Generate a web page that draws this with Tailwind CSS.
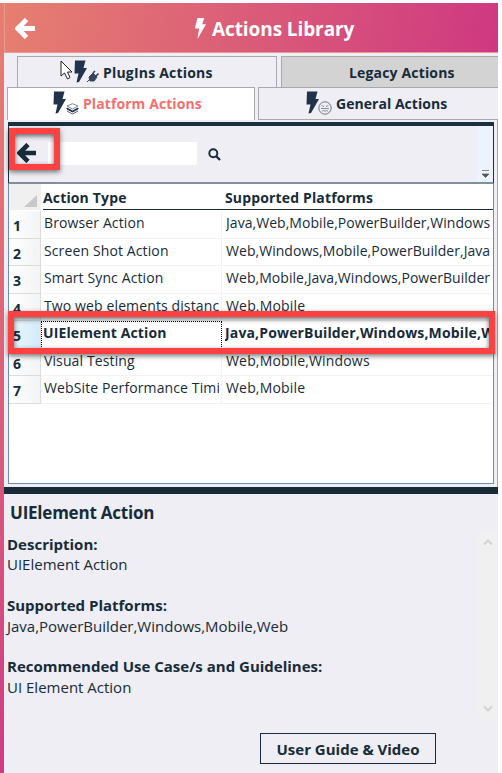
<!DOCTYPE html>
<html lang="en">
<head>
<meta charset="utf-8">
<title>Actions Library</title>
<script src="https://cdn.jsdelivr.net/npm/@tailwindcss/browser@4"></script>
</head>
<body class="w-[502px] h-[773px] overflow-hidden bg-white pt-[3px] font-['Open_Sans',sans-serif] text-[#172b3a] whitespace-nowrap">
<svg class="hidden">
  <symbol id="bolt" viewBox="0 0 14 24" preserveAspectRatio="none"><path d="M4 0H12L9.5 7H14L4 24L6 12H1Z" fill="currentColor"/></symbol>
  <symbol id="bolt-solid" viewBox="0 0 13 23" preserveAspectRatio="none"><path d="M1 .5H11.5L9.5 8H13L5 22L2.5 22.5L4.5 13.5H.5Z" fill="currentColor"/></symbol>
  <symbol id="arrow" viewBox="0 0 20 20"><path d="M11 1.5L2.5 10L11 18.5M3 10H19" fill="none" stroke="currentColor" stroke-width="4.6"/></symbol>
</svg>
<div class="flex w-[498px] h-[770px]">
  <div class="w-1 shrink-0 bg-linear-to-b from-[#e67f70] to-[#d03a82]"></div>
  <main class="flex flex-col w-[494px] bg-[#eeeef4]">
    <header class="relative h-[50px] shrink-0 border-b border-l border-[#eb9a92] bg-linear-[100deg,#e67f70,#cf3881] text-white">
      <svg class="absolute left-[10px] top-[15px] w-[21px] h-[21px]"><use href="#arrow"/></svg>
      <svg class="absolute left-[189px] top-[15px] w-[12px] h-[21px]"><use href="#bolt"/></svg>
      <h1 class="absolute left-[207px] top-[12px] text-[19px] leading-7 font-bold tracking-[-0.09px]">Actions Library</h1>
    </header>
    <nav class="h-[67px] shrink-0 pt-[3px] text-[14px] font-bold">
      <div class="flex h-[31px] pl-[13px] gap-1">
        <div class="flex w-[260px] border border-b-0 border-[#a9a9ac] pl-[56px] relative">
          <svg class="w-[13px] h-[23px] mt-[3px] text-[#22324d]"><use href="#bolt-solid"/></svg>
          <svg class="w-[12px] h-[12px] mt-[13px] text-[#36445c]" viewBox="0 0 12 12"><path d="M0 12L3 9M2 7L6 3L10 7L7 11H3Z" fill="currentColor" stroke="currentColor"/><path d="M6 3L8 1M9 6L11.5 3.5" stroke="currentColor" stroke-width="1.7"/></svg>
          <span class="absolute left-[85px] top-[6px] leading-5 tracking-[0.2px]">PlugIns Actions</span>
          <svg class="absolute left-[42px] top-[3px] w-[13px] h-[20px]" viewBox="0 0 13 20"><path d="M1 1V16L4.5 13L7.5 19L10 17.5L7.5 12H12Z" fill="#fff" stroke="#222" stroke-width="1"/></svg>
        </div>
        <div class="flex-1 border border-b-0 border-r-0 border-[#a9a9ac] bg-[#d3d3d3] pl-[67px] pt-[6px] leading-5 tracking-[0.16px]">Legacy Actions</div>
      </div>
      <div class="flex h-[33px] pl-[3px] gap-[3px]">
        <div class="relative flex w-[248px] border border-b-0 border-[#a9a9ac] bg-white pl-[45px] text-[#f47070]">
          <svg class="w-[13px] h-[23px] mt-[3px] text-[#22324d]"><use href="#bolt-solid"/></svg>
          <svg class="w-[13px] h-[12px] mt-[15px]" viewBox="0 0 13 12"><path d="M1 3L6.5 .7L12 3L6.5 6Z" fill="#fff" stroke="#7c8593"/><path d="M1 5L6.5 8L12 5V6L6.5 9L1 6Z" fill="#22324d" stroke="#22324d"/><path d="M1 8L6.5 11L12 8" fill="none" stroke="#596377"/></svg>
          <span class="absolute left-[75px] top-[6px] leading-5 tracking-[0.08px]">Platform Actions</span>
        </div>
        <div class="relative flex flex-1 border border-r-0 border-[#a9a9ac] pl-[47px]">
          <svg class="w-[13px] h-[23px] mt-[3px] text-[#22324d]"><use href="#bolt-solid"/></svg>
          <svg class="-ml-px w-[14px] h-[14px] mt-[13px]" viewBox="0 0 14 14"><g fill="none" stroke="#6c7588"><circle cx="7" cy="7" r="6.2"/><path d="M3.5 4.5l2.5 1M10.5 4.5l-2.5 1M3 7.5h8M4 10.3l1.5-.8 1.5.6 1.5-.6 1.5.8" stroke-width=".8"/></g></svg>
          <span class="absolute left-[77px] top-[6px] leading-5 tracking-[0.04px]">General Actions</span>
        </div>
      </div>
    </nav>
    <section class="relative h-[367px] shrink-0 border-r border-[#a9a9ac] pl-1 pr-[3px] pt-[2px]">
      <div class="flex h-[62px] border-t-4 border-b-2 border-r border-l border-t-[#1b303e] border-x-[#1b303e] border-b-[#7f909b]">
        <svg class="ml-[8px] mt-[17px] w-[20px] h-[20px]"><use href="#arrow"/></svg>
        <div class="ml-[11px] mt-[16px] w-[149px] h-[23px] bg-white"></div>
        <svg class="ml-[11px] mt-[22px] w-[13px] h-[13px]" viewBox="0 0 13 13"><circle cx="5.3" cy="5.3" r="4" fill="none" stroke="currentColor" stroke-width="1.9"/><path d="M8 8L12 12" stroke="currentColor" stroke-width="2.3"/></svg>
        <div class="ml-auto w-4 bg-[#edf3fd] pt-[44px] pl-[5px]"><svg class="w-[7px] h-[8px]" viewBox="0 0 7 8"><path d="M0 .5H7M0 4H7L3.5 7.5Z" fill="#555" stroke="#555" stroke-width=".7"/></svg></div>
      </div>
      <div class="h-[300px] border border-t-0 border-[#6b8db0] bg-white text-[14px]">
        <div class="grid grid-cols-[32px_182px_1fr] h-[25px] mb-[2px] font-bold leading-[28px] tracking-[0.15px]">
          <div class="bg-[#f0f0f0] pt-[11px] pl-[15px]"><svg class="w-[13px] h-[12px]" viewBox="0 0 13 12"><path d="M13 0V12H0Z" fill="#c8c8c8"/></svg></div>
          <div class="ml-[2px] h-[26px] border-b border-[#172b3a]">Action Type</div>
          <div class="pl-[2px] h-[26px] border-b border-[#172b3a]">Supported Platforms</div>
        </div>
        <div id="rows" class="grid grid-cols-[32px_181px_1fr] auto-rows-[27.5px]"></div>
      </div>
      <div class="absolute left-[5px] top-[8px] w-[51px] h-[42px] border-6 border-[#fb4141] shadow-[0_2px_5px_#0008,inset_0_2px_5px_#0009]"></div>
      <div class="absolute left-[4px] top-[191px] w-[487px] h-[43px] border-6 border-[#fb4141] shadow-[0_2px_5px_#0008,inset_0_2px_5px_#0009]"></div>
    </section>
    <section class="relative flex-1 border-t-7 border-[#172b38] pl-[3px] text-[15px] leading-5">
      <h2 class="pl-[3px] pt-[7px] text-[17px] leading-6 font-bold tracking-[-0.22px]">UIElement Action</h2>
      <div class="pt-[9px]"><b>Description:</b><p>UIElement Action</p></div>
      <div class="pt-[21px]"><b>Supported Platforms:</b><p class="relative top-px">Java,PowerBuilder,Windows,Mobile,Web</p></div>
      <div class="pt-[21px]"><b>Recommended Use Case/s and Guidelines:</b><p class="relative top-px">UI Element Action</p></div>
      <button class="ml-[253px] mt-[37px] block w-[176px] h-[31px] border border-[#172b3a] font-bold">User Guide &amp; Video</button>
      <div class="absolute right-0 top-[37px] flex flex-col justify-between items-center w-[20px] h-[188px] bg-[#f0f0f0] pt-[7px] pb-[6px]">
        <svg class="w-[10px] h-[8px]" viewBox="0 0 10 8"><path d="M1 6.5L5 2.5L9 6.5" fill="none" stroke="#d2d2d4" stroke-width="2"/></svg>
        <svg class="w-[10px] h-[8px]" viewBox="0 0 10 8"><path d="M1 1.5L5 5.5L9 1.5" fill="none" stroke="#d2d2d4" stroke-width="2"/></svg>
      </div>
    </section>
  </main>
</div>
<script>
const rows = [
  ["Browser Action", "Java,Web,Mobile,PowerBuilder,Windows"],
  ["Screen Shot Action", "Web,Windows,Mobile,PowerBuilder,Java"],
  ["Smart Sync Action", "Web,Mobile,Java,Windows,PowerBuilder"],
  ["Two web elements distance", "Web,Mobile"],
  ["UIElement Action", "Java,PowerBuilder,Windows,Mobile,Web"],
  ["Visual Testing", "Web,Mobile,Windows"],
  ["WebSite Performance Timing", "Web,Mobile"]
];
document.getElementById("rows").innerHTML = rows.map(([a, p], i) => {
  const sel = i === 4;
  return `<div class="border-b border-r border-[#dcdcdc] pl-1 pt-[5px] leading-5 font-bold bg-linear-to-r ${sel ? "from-[#edf7fd] to-[#d3ebfa]" : "from-white to-[#f3f4f6]"}">${i + 1}</div>
  <div class="${sel ? "border border-dotted border-black font-bold pl-[1px] tracking-[0.12px]" : "border-b border-r border-[#f2f2f2] pl-[3px] tracking-[0.12px]"} overflow-hidden pr-[2px]"><div class="overflow-hidden ${sel ? "leading-[22px]" : "leading-[24px]"}">${a}</div></div>
  <div class="${sel ? "font-bold pl-[3px] tracking-[0.15px]" : "pl-[4px] tracking-[0.05px]"} border-b border-[#f2f2f2] overflow-hidden pr-[3px]"><div class="overflow-hidden leading-[24px] ${i > 4 || i === 3 ? "tracking-[0.17px]" : ""}">${p}</div></div>`;
}).join("");
</script>
</body>
</html>
